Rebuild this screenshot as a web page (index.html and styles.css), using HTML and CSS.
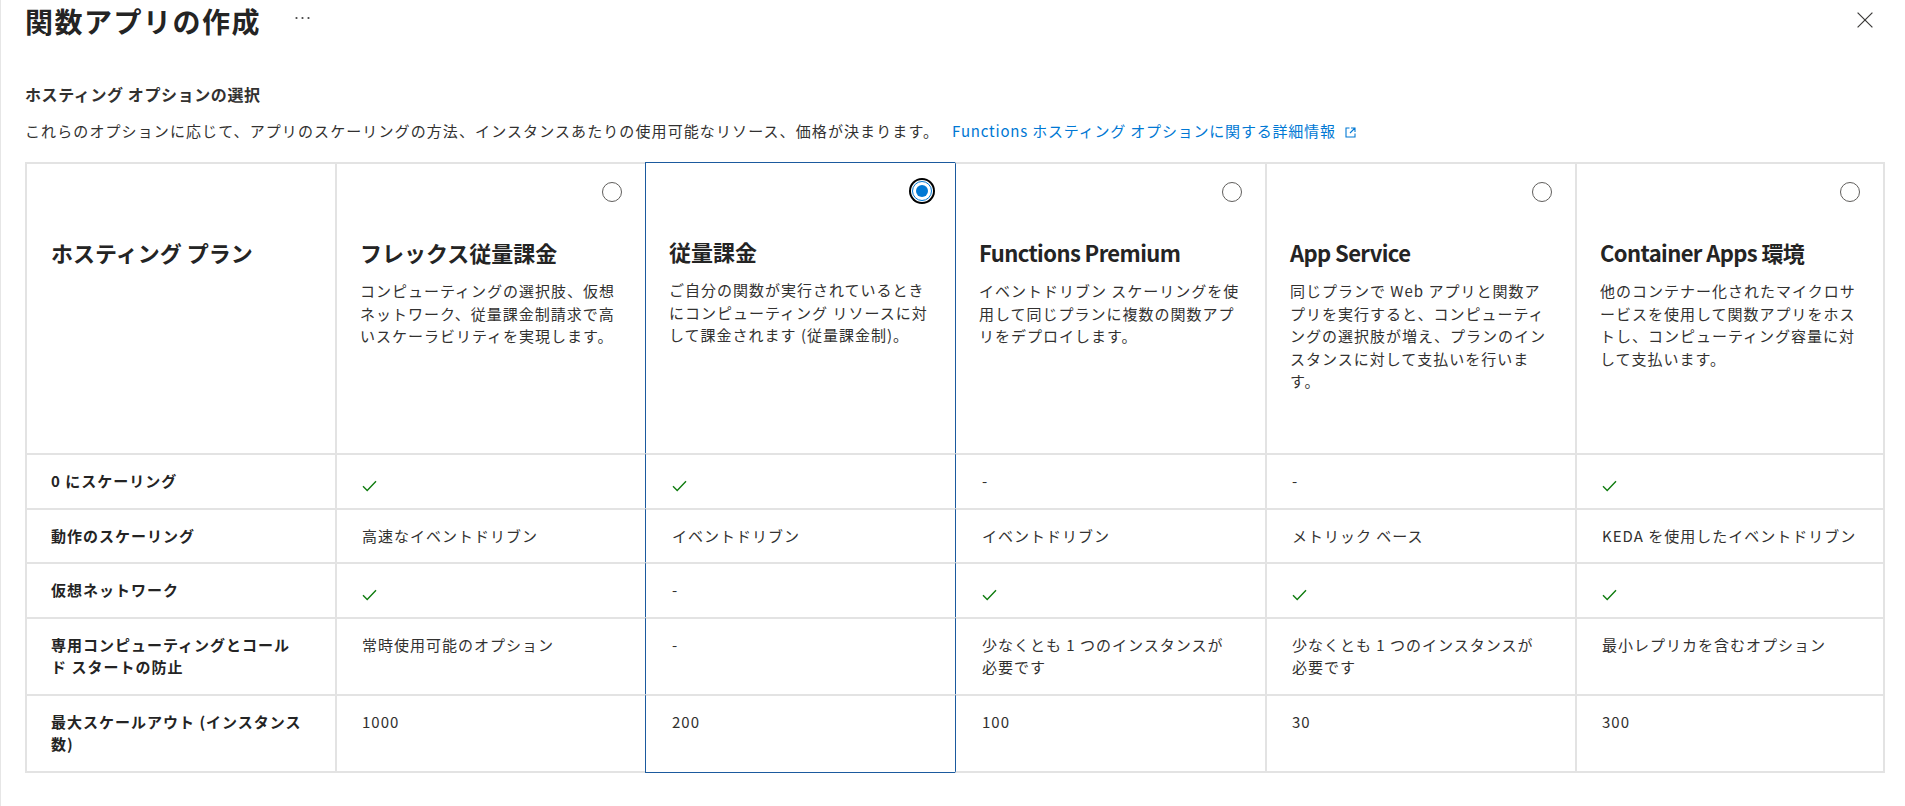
FILE: index.html
```html
<!DOCTYPE html>
<html lang="ja">
<head>
<meta charset="utf-8">
<title>関数アプリの作成</title>
<link rel="stylesheet" href="styles.css">
</head>
<body>
<div class="page">
  <header class="top">
    <div class="title-group">
      <h1 class="title">関数アプリの作成</h1>
      <svg class="more" width="15" height="4" viewBox="0 0 15 4"><circle cx="1.5" cy="2" r="1.1"/><circle cx="7.5" cy="2" r="1.1"/><circle cx="13.5" cy="2" r="1.1"/></svg>
    </div>
    <svg class="close" width="16" height="16" viewBox="0 0 16 16"><path d="M0.6 0.6L15.4 15.4M15.4 0.6L0.6 15.4"/></svg>
  </header>

  <h2 class="subtitle">ホスティング オプションの選択</h2>
  <p class="desc">これらのオプションに応じて、アプリのスケーリングの方法、インスタンスあたりの使用可能なリソース、価格が決まります。<a class="link" href="#">Functions ホスティング オプションに関する詳細情報<svg class="ext" width="11" height="11" viewBox="0 0 11 11"><path d="M4.5 1H1v9h9V6.5M6 1h4v4M10 1L5 6"/></svg></a></p>

  <div class="grid">
    <!-- header row -->
    <div class="cell head label">
      <div class="plan-title">ホスティング プラン</div>
    </div>
    <div class="cell head">
      <div class="radio-row"><span class="radio"></span></div>
      <div class="col-title">フレックス従量課金</div>
      <div class="col-desc">コンピューティングの選択肢、仮想ネットワーク、従量課金制請求で高いスケーラビリティを実現します。</div>
    </div>
    <div class="cell head sel">
      <div class="radio-row"><span class="radio checked"><span class="dot"></span></span></div>
      <div class="col-title">従量課金</div>
      <div class="col-desc">ご自分の関数が実行されているときにコンピューティング リソースに対して課金されます (従量課金制)。</div>
    </div>
    <div class="cell head after">
      <div class="radio-row"><span class="radio"></span></div>
      <div class="col-title latin">Functions Premium</div>
      <div class="col-desc">イベントドリブン スケーリングを使用して同じプランに複数の関数アプリをデプロイします。</div>
    </div>
    <div class="cell head">
      <div class="radio-row"><span class="radio"></span></div>
      <div class="col-title latin">App Service</div>
      <div class="col-desc">同じプランで Web アプリと関数アプリを実行すると、コンピューティングの選択肢が増え、プランのインスタンスに対して支払いを行います。</div>
    </div>
    <div class="cell head last-col">
      <div class="radio-row"><span class="radio"></span></div>
      <div class="col-title latin">Container Apps 環境</div>
      <div class="col-desc">他のコンテナー化されたマイクロサービスを使用して関数アプリをホストし、コンピューティング容量に対して支払います。</div>
    </div>

    <!-- row 1 -->
    <div class="cell label">0 にスケーリング</div>
    <div class="cell val"><div class="check-wrap"><svg class="check" width="15" height="12" viewBox="0 0 15 12"><path d="M1 6.3l4.2 4.2L14 1.2"/></svg></div></div>
    <div class="cell val sel"><div class="check-wrap"><svg class="check" width="15" height="12" viewBox="0 0 15 12"><path d="M1 6.3l4.2 4.2L14 1.2"/></svg></div></div>
    <div class="cell val after">-</div>
    <div class="cell val">-</div>
    <div class="cell val last-col"><div class="check-wrap"><svg class="check" width="15" height="12" viewBox="0 0 15 12"><path d="M1 6.3l4.2 4.2L14 1.2"/></svg></div></div>

    <!-- row 2 -->
    <div class="cell label">動作のスケーリング</div>
    <div class="cell val">高速なイベントドリブン</div>
    <div class="cell val sel">イベントドリブン</div>
    <div class="cell val after">イベントドリブン</div>
    <div class="cell val">メトリック ベース</div>
    <div class="cell val last-col">KEDA を使用したイベントドリブン</div>

    <!-- row 3 -->
    <div class="cell label">仮想ネットワーク</div>
    <div class="cell val"><div class="check-wrap"><svg class="check" width="15" height="12" viewBox="0 0 15 12"><path d="M1 6.3l4.2 4.2L14 1.2"/></svg></div></div>
    <div class="cell val sel">-</div>
    <div class="cell val after"><div class="check-wrap"><svg class="check" width="15" height="12" viewBox="0 0 15 12"><path d="M1 6.3l4.2 4.2L14 1.2"/></svg></div></div>
    <div class="cell val"><div class="check-wrap"><svg class="check" width="15" height="12" viewBox="0 0 15 12"><path d="M1 6.3l4.2 4.2L14 1.2"/></svg></div></div>
    <div class="cell val last-col"><div class="check-wrap"><svg class="check" width="15" height="12" viewBox="0 0 15 12"><path d="M1 6.3l4.2 4.2L14 1.2"/></svg></div></div>

    <!-- row 4 -->
    <div class="cell label">専用コンピューティングとコールド スタートの防止</div>
    <div class="cell val">常時使用可能のオプション</div>
    <div class="cell val sel">-</div>
    <div class="cell val after">少なくとも 1 つのインスタンスが必要です</div>
    <div class="cell val">少なくとも 1 つのインスタンスが必要です</div>
    <div class="cell val last-col">最小レプリカを含むオプション</div>

    <!-- row 5 -->
    <div class="cell label last-row">最大スケールアウト (インスタンス数)</div>
    <div class="cell val last-row">1000</div>
    <div class="cell val sel last-row">200</div>
    <div class="cell val after last-row">100</div>
    <div class="cell val last-row">30</div>
    <div class="cell val last-col last-row">300</div>
  </div>
</div>
</body>
</html>
```

FILE: styles.css
```css
* {
  box-sizing: border-box;
}

html, body {
  margin: 0;
  padding: 0;
  background: #ffffff;
}

body {
  font-family: "Noto Sans CJK JP", "Noto Sans", sans-serif;
  color: #323130;
  border-left: 1px solid #e6e6e6;
  min-height: 806px;
}

.page {
  padding: 0 32px 0 24px;
}

.top {
  display: flex;
  justify-content: space-between;
  align-items: flex-start;
}

.title-group {
  display: flex;
  align-items: flex-start;
}

.title {
  margin: 0;
  padding-top: 5px;
  font-size: 28px;
  line-height: 32px;
  letter-spacing: 1.5px;
  font-weight: 700;
  color: #242424;
}

.more {
  margin: 16px 0 0 34px;
  fill: #444444;
}

.close {
  margin-top: 12px;
  fill: none;
  stroke: #3b3a39;
  stroke-width: 1.2;
}

.subtitle {
  margin: 46px 0 0;
  font-size: 16px;
  line-height: 22px;
  letter-spacing: 0.6px;
  font-weight: 700;
  color: #323130;
}

.desc {
  margin: 15px 0 0;
  font-size: 15px;
  line-height: 22px;
  letter-spacing: 1.1px;
  color: #323130;
}

.link {
  margin-left: 13px;
  color: #0078d4;
  text-decoration: none;
  letter-spacing: 0.8px;
}

.ext {
  margin-left: 9px;
  vertical-align: -1px;
  fill: none;
  stroke: #0078d4;
  stroke-width: 1.1;
}

.grid {
  margin-top: 20px;
  width: 1860px;
  display: grid;
  grid-template-columns: repeat(6, 1fr);
}

.cell {
  border-left: 2px solid #e3e3e3;
  border-top: 2px solid #e3e3e3;
  font-size: 15px;
  line-height: 22.5px;
  letter-spacing: 1px;
}

.cell.last-col {
  border-right: 2px solid #e3e3e3;
}

.cell.last-row {
  border-bottom: 2px solid #e3e3e3;
}

.cell.sel {
  border-left: 1px solid #1b5a9e;
}

.cell.after {
  border-left: 1px solid #1b5a9e;
}

.cell.head.sel {
  border-top: 1px solid #1b5a9e;
}

.cell.last-row.sel {
  border-bottom: 1px solid #1b5a9e;
}

.head {
  min-height: 291px;
  padding: 18px 23px 20px 23px;
}

.head.label {
  padding: 74px 30px 20px 24px;
}

.plan-title,
.col-title {
  font-size: 22px;
  line-height: 28px;
  letter-spacing: 0;
  font-weight: 700;
  color: #242424;
}

.col-title.latin {
  letter-spacing: -0.6px;
}

.radio-row {
  display: flex;
  justify-content: flex-end;
  height: 20px;
}

.radio {
  width: 20px;
  height: 20px;
  border: 1px solid #605e5c;
  border-radius: 50%;
  background: #ffffff;
}

.radio.checked {
  border: 1px solid #0078d4;
  box-shadow: 0 0 0 1px #ffffff, 0 0 0 3px #000000;
  display: flex;
  align-items: center;
  justify-content: center;
}

.dot {
  width: 12px;
  height: 12px;
  border-radius: 50%;
  background: #0078d4;
}

.col-title {
  margin-top: 36px;
}

.col-desc {
  margin-top: 14px;
  font-size: 15px;
  line-height: 22.5px;
  letter-spacing: 1px;
  color: #323130;
}

.label {
  padding: 15px 32px 15px 24px;
  font-weight: 700;
  color: #242424;
}

.val {
  padding: 15px 29px 15px 25px;
  color: #323130;
}

.val.sel,
.val.after {
  padding-left: 26px;
}

.val.last-col {
  padding-right: 18px;
}

.check-wrap {
  height: 22.5px;
  padding-top: 10px;
}

.check {
  display: block;
  fill: none;
  stroke: #107c10;
  stroke-width: 1.4;
}
```
